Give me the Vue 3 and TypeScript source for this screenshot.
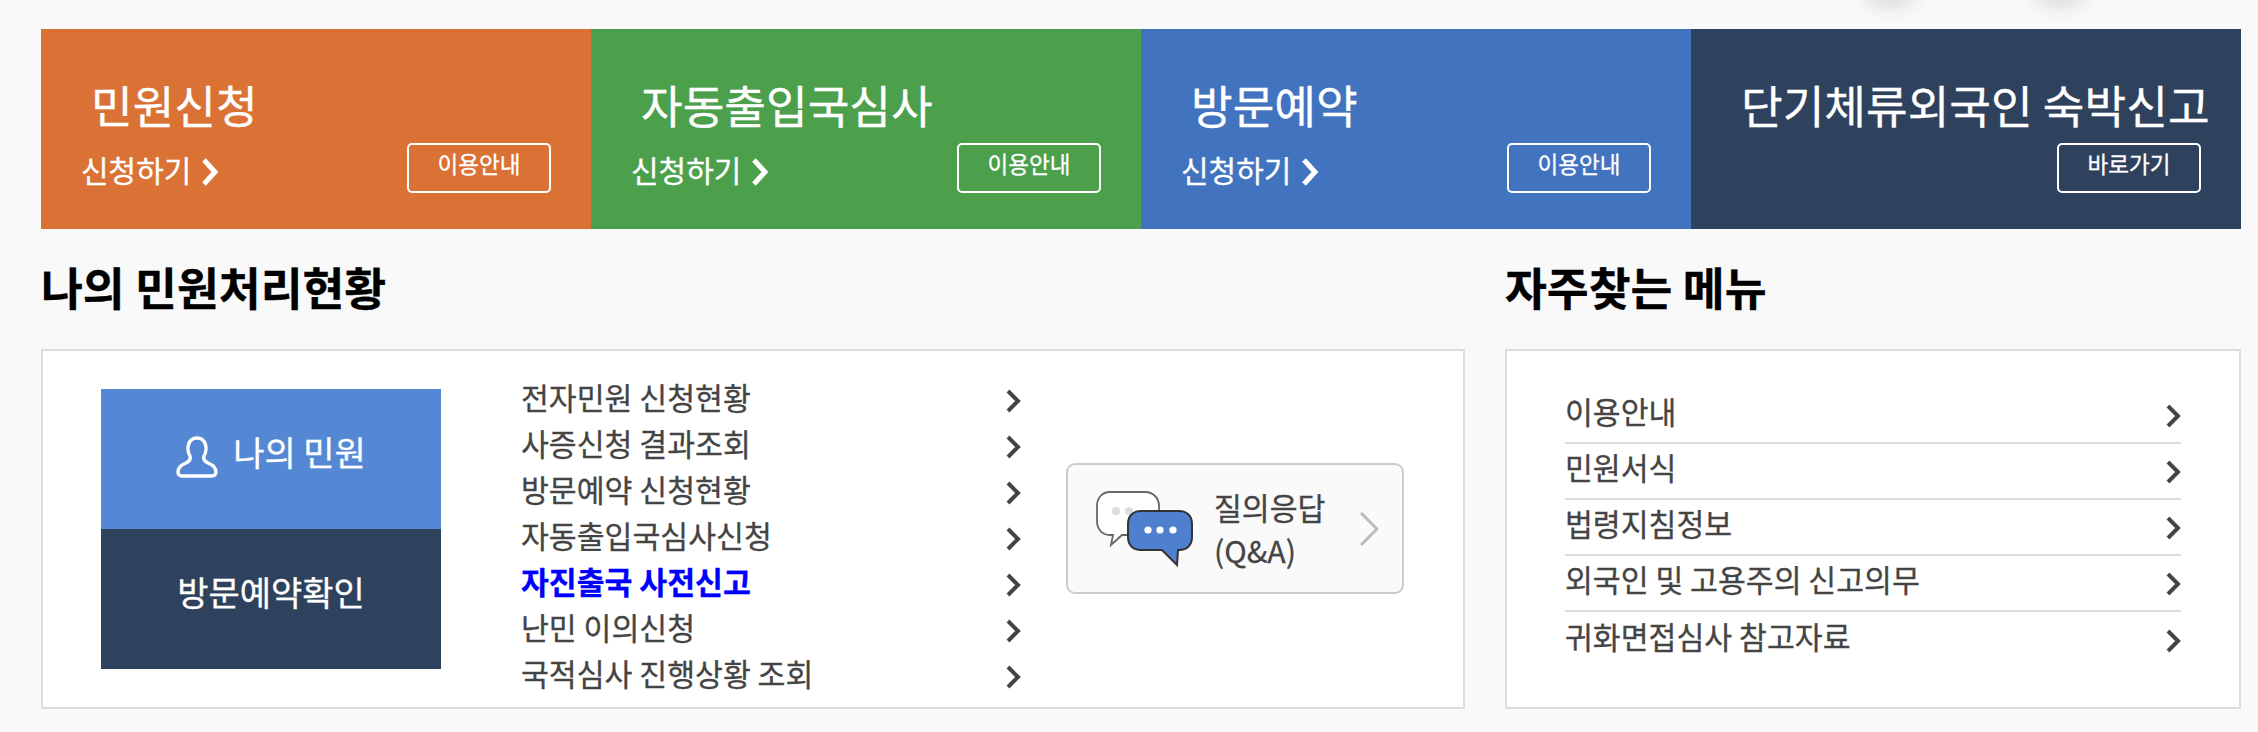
<script setup lang="ts">
const tiles = [
  { title: '민원신청', link: '신청하기', btn: '이용안내', color: '#da7235' },
  { title: '자동출입국심사', link: '신청하기', btn: '이용안내', color: '#4ca04c' },
  { title: '방문예약', link: '신청하기', btn: '이용안내', color: '#4273bf' },
  { title: '단기체류외국인 숙박신고', link: '', btn: '바로가기', color: '#2f425d' },
];

const statusLinks = [
  { label: '전자민원 신청현황' },
  { label: '사증신청 결과조회' },
  { label: '방문예약 신청현황' },
  { label: '자동출입국심사신청' },
  { label: '자진출국 사전신고', hot: true },
  { label: '난민 이의신청' },
  { label: '국적심사 진행상황 조회' },
];

const quickLinks = ['이용안내', '민원서식', '법령지침정보', '외국인 및 고용주의 신고의무', '귀화면접심사 참고자료'];
</script>

<template>
  <div class="page">
    <span class="smudge smudge-a"></span>
    <span class="smudge smudge-b"></span>

    <!-- Top tiles -->
    <div class="tiles">
      <div v-for="t in tiles" :key="t.title" class="tile" :style="{ background: t.color }">
        <div class="tile-title">{{ t.title }}</div>
        <div class="tile-row">
          <span v-if="t.link" class="tile-link">
            {{ t.link }}
            <svg class="tile-arrow" viewBox="0 0 20 28" fill="none" stroke="#fff" stroke-width="5">
              <path d="M4 2 L15 14 L4 26" />
            </svg>
          </span>
          <span class="tile-btn">{{ t.btn }}</span>
        </div>
      </div>
    </div>

    <div class="lower">
      <section>
        <h2 class="heading">나의 민원처리현황</h2>
        <div class="panel status">
          <div class="status-side">
            <div class="side-block side-mine">
              <svg class="person" viewBox="0 0 42 42" fill="none" stroke="#fff" stroke-width="3.4">
                <path d="M14 20 C10 13 12 2 21 2 C30 2 32 13 28 20 C27 23 28 25 32 27 C37 29 40 31 40 36 C40 39 38 40 35 40 H7 C4 40 2 39 2 36 C2 31 5 29 10 27 C14 25 15 23 14 20 Z" />
              </svg>
              나의 민원
            </div>
            <div class="side-block side-visit">방문예약확인</div>
          </div>

          <ul class="status-list">
            <li v-for="s in statusLinks" :key="s.label" class="status-item" :class="{ hot: s.hot }">
              <span class="row-label">{{ s.label }}</span>
              <svg class="chev" viewBox="0 0 16 24" fill="none" stroke="#444" stroke-width="4">
                <path d="M3 2 L13 12 L3 22" />
              </svg>
            </li>
          </ul>

          <div class="qna">
            <svg class="qna-icon" viewBox="0 0 100 78">
              <path d="M14 2 H49 C57 2 63 8 63 16 V31 C63 39 57 45 49 45 H26 L15 55 L17 45 H14 C6 45 1 39 1 31 V16 C1 8 6 2 14 2 Z" fill="#fff" stroke="#666" stroke-width="1.8" />
              <circle cx="20" cy="21" r="4" fill="#ddd" />
              <circle cx="33" cy="21" r="4" fill="#ddd" />
              <path d="M45 21 H83 C91 21 96 26 96 34 V47 C96 55 91 60 83 60 H82 L81 75 L66 60 H45 C37 60 32 55 32 47 V34 C32 26 37 21 45 21 Z" fill="#4f80cf" stroke="#333" stroke-width="2" />
              <circle cx="52" cy="40" r="3.6" fill="#fff" />
              <circle cx="64" cy="40" r="3.6" fill="#fff" />
              <circle cx="77" cy="40" r="3.6" fill="#fff" />
            </svg>
            <div class="qna-text">질의응답<br />(Q&amp;A)</div>
            <svg class="qna-chev" viewBox="0 0 20 34" fill="none" stroke="#bbb" stroke-width="3">
              <path d="M2 1 L18 17 L2 33" />
            </svg>
          </div>
        </div>
      </section>

      <section>
        <h2 class="heading">자주찾는 메뉴</h2>
        <div class="panel quick">
          <ul class="quick-list">
            <li v-for="q in quickLinks" :key="q" class="quick-item">
              <span class="row-label">{{ q }}</span>
              <svg class="chev" viewBox="0 0 16 24" fill="none" stroke="#444" stroke-width="4">
                <path d="M3 2 L13 12 L3 22" />
              </svg>
            </li>
          </ul>
        </div>
      </section>
    </div>
  </div>
</template>

<style>
html, body { background: #f9f9f9; }
</style>

<style scoped>
.page {
  position: relative;
  width: 2258px;
  height: 732px;
  box-sizing: border-box;
  padding: 29px 17px 0 41px;
  background: #f9f9f9;
  font-family: "Noto Sans CJK KR", "Noto Sans", sans-serif;
  -webkit-text-stroke: 0.3px currentColor;
  overflow: hidden;
}

.smudge {
  position: absolute;
  top: -14px;
  width: 50px;
  height: 22px;
  border-radius: 50%;
  background: #ddd;
  filter: blur(8px);
}
.smudge-a { left: 1865px; }
.smudge-b { left: 2035px; }

/* Tiles */
.tiles {
  display: grid;
  grid-template-columns: repeat(4, 550px);
  height: 200px;
}
.tile {
  box-sizing: border-box;
  padding: 48px 40px 0 41px;
  color: #fff;
}
.tile-title {
  margin-left: 9px;
  font-size: 45.3px;
  line-height: 54px;
  white-space: nowrap;
}
.tile-row {
  display: flex;
  align-items: center;
  margin-top: 12px;
}
.tile-link {
  display: flex;
  align-items: center;
  gap: 9px;
  margin-left: -1px;
  padding-top: 1px;
  font-size: 30px;
}
.tile-arrow { width: 20px; height: 28px; margin-top: 6px; filter: blur(0.4px); }
.tile-btn {
  box-sizing: border-box;
  width: 144px;
  height: 50px;
  margin-left: auto;
  padding-bottom: 10px;
  border: 2px solid #fff;
  border-radius: 5px;
  display: flex;
  align-items: center;
  justify-content: center;
  font-size: 22.5px;
}

/* Lower */
.lower {
  display: grid;
  grid-template-columns: 1424px 736px;
  gap: 40px;
}
.heading {
  margin: 0;
  height: 120px;
  display: flex;
  align-items: center;
  padding-bottom: 6px;
  color: #000;
  font-size: 45.5px;
  font-weight: 700;
  box-sizing: border-box;
}
.panel {
  box-sizing: border-box;
  height: 360px;
  background: #fff;
  border: 2px solid #ddd;
  color: #444;
  font-size: 30.3px;
}

.status {
  display: flex;
  align-items: flex-start;
  padding: 38px 0 0 58px;
}
.status-side { width: 340px; flex-shrink: 0; }
.side-block {
  box-sizing: border-box;
  height: 140px;
  padding-bottom: 16px;
  display: flex;
  align-items: center;
  justify-content: center;
  color: #fff;
  font-size: 34px;
}
.side-mine { background: #5588d4; gap: 15px; }
.side-visit { background: #2f425d; }
.person { width: 42px; height: 42px; margin-top: 12px; filter: blur(0.4px); }

.status-list {
  list-style: none;
  margin: -11px 0 0 80px;
  padding: 0;
  width: 500px;
}
.status-item {
  height: 46px;
  display: flex;
  align-items: center;
  justify-content: space-between;
  white-space: nowrap;
}
.status-item .row-label { padding-bottom: 8px; }
.status-item.hot { color: #0000ff; font-weight: 700; }
.chev { width: 16px; height: 24px; flex-shrink: 0; filter: blur(0.4px); }

.qna {
  box-sizing: border-box;
  width: 338px;
  height: 131px;
  margin: 74px 0 0 45px;
  padding-left: 28px;
  display: flex;
  align-items: center;
  background: #fafafa;
  border: 2px solid #ccc;
  border-radius: 9px;
}
.qna-icon { width: 100px; height: 78px; flex-shrink: 0; }
.qna-text {
  margin-left: 18px;
  width: 145px;
  font-size: 30.3px;
  line-height: 43px;
  white-space: nowrap;
}
.qna-chev { width: 20px; height: 34px; }

.quick { padding: 37px 58px 0; }
.quick-list { list-style: none; margin: 0; padding: 0; }
.quick-item {
  box-sizing: border-box;
  height: 56px;
  display: flex;
  align-items: center;
  justify-content: space-between;
  border-bottom: 2px solid #ddd;
  white-space: nowrap;
}
.quick-item .row-label { padding-bottom: 8px; }
.quick-item .chev { margin-top: 1px; }
.quick-item:last-child { border-bottom: none; }
</style>
